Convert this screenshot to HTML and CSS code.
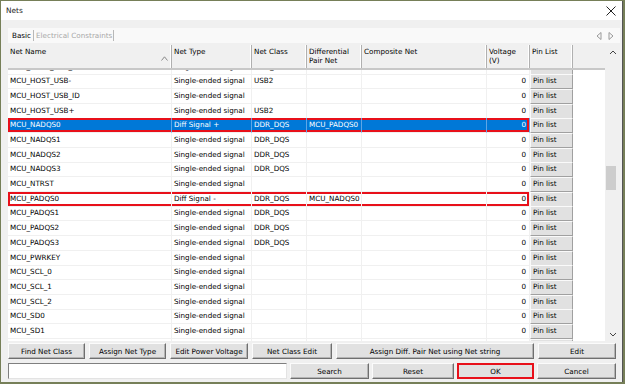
FILE: index.html
```html
<!DOCTYPE html>
<html lang="en">
<head>
    <meta charset="UTF-8">
    <title>Nets</title>
    <link rel="stylesheet" href="styles.css">
</head>
<body>
    <div class="window">
        <div class="titlebar">
            <span class="title">Nets</span>
            <svg class="close-icon" width="10" height="10" viewBox="0 0 10 10">
                <path d="M0.5 0.5 L9.5 9.5 M9.5 0.5 L0.5 9.5" stroke="#222" stroke-width="1" fill="none"/>
            </svg>
        </div>

        <div class="content">
            <div class="tabs">
                <span class="tab active">Basic</span>
                <span class="tab disabled">Electrical Constraints</span>
                <span class="tab-arrows">
                    <svg width="6" height="8" viewBox="0 0 6 8"><path d="M5 0.5 L1 4 L5 7.5 Z" stroke="#999" fill="none"/></svg>
                    <svg width="6" height="8" viewBox="0 0 6 8"><path d="M1 0.5 L5 4 L1 7.5 Z" stroke="#999" fill="none"/></svg>
                </span>
            </div>

            <div class="grid">
                <div class="grid-main">
                    <div class="head">
                        <div class="hcell">Net Name
                            <svg class="sort-icon" width="7" height="5" viewBox="0 0 7 5"><path d="M0.5 4.5 L3.5 0.8 L6.5 4.5" stroke="#888" fill="none"/></svg>
                        </div>
                        <div class="hcell">Net Type</div>
                        <div class="hcell">Net Class</div>
                        <div class="hcell">Differential<br>Pair Net</div>
                        <div class="hcell">Composite Net</div>
                        <div class="hcell">Voltage<br>(V)</div>
                        <div class="hcell">Pin List</div>
                        <div class="hcell filler"></div>
                    </div>
                    <div class="body">
                        <div class="rows" id="rows"></div>
                    </div>
                </div>
                <div class="vscroll">
                    <svg class="arrow" width="8" height="5" viewBox="0 0 8 5"><path d="M1 4 L4 1 L7 4" stroke="#444" fill="none"/></svg>
                    <div class="track">
                        <div class="thumb"></div>
                    </div>
                    <svg class="arrow" width="8" height="5" viewBox="0 0 8 5"><path d="M1 1 L4 4 L7 1" stroke="#444" fill="none"/></svg>
                </div>
            </div>

            <div class="btn-row first">
                <button class="btn">Find Net Class</button>
                <button class="btn">Assign Net Type</button>
                <button class="btn">Edit Power Voltage</button>
                <button class="btn">Net Class Edit</button>
                <button class="btn">Assign Diff. Pair Net using Net string</button>
                <button class="btn">Edit</button>
            </div>
            <div class="btn-row second">
                <input type="text" class="search-input">
                <button class="btn">Search</button>
                <button class="btn">Reset</button>
                <button class="btn ok">OK</button>
                <button class="btn">Cancel</button>
            </div>
        </div>
    </div>

    <script>
        // last entry is the row cut off under the list, only its top edge shows
        const nets = [
            ['MCU_HOST_USB_EN', 'Single-ended signal', 'DDR_CLK', ''],
            ['MCU_HOST_USB-', 'Single-ended signal', 'USB2', ''],
            ['MCU_HOST_USB_ID', 'Single-ended signal', '', ''],
            ['MCU_HOST_USB+', 'Single-ended signal', 'USB2', ''],
            ['MCU_NADQS0', 'Diff Signal +', 'DDR_DQS', 'MCU_PADQS0', 'selected'],
            ['MCU_NADQS1', 'Single-ended signal', 'DDR_DQS', ''],
            ['MCU_NADQS2', 'Single-ended signal', 'DDR_DQS', ''],
            ['MCU_NADQS3', 'Single-ended signal', 'DDR_DQS', ''],
            ['MCU_NTRST', 'Single-ended signal', '', ''],
            ['MCU_PADQS0', 'Diff Signal -', 'DDR_DQS', 'MCU_NADQS0', 'marked'],
            ['MCU_PADQS1', 'Single-ended signal', 'DDR_DQS', ''],
            ['MCU_PADQS2', 'Single-ended signal', 'DDR_DQS', ''],
            ['MCU_PADQS3', 'Single-ended signal', 'DDR_DQS', ''],
            ['MCU_PWRKEY', 'Single-ended signal', '', ''],
            ['MCU_SCL_0', 'Single-ended signal', '', ''],
            ['MCU_SCL_1', 'Single-ended signal', '', ''],
            ['MCU_SCL_2', 'Single-ended signal', '', ''],
            ['MCU_SD0', 'Single-ended signal', '', ''],
            ['MCU_SD1', 'Single-ended signal', '', ''],
            ['', '', '', '', 'empty']
        ];

        const rows = document.getElementById('rows');
        nets.forEach(net => {
            const row = document.createElement('div');
            const blank = net[4] === 'empty';
            row.className = 'row' + (net[4] ? ' ' + net[4] : '');
            row.innerHTML =
                `<div class="cell">${net[0]}</div>` +
                `<div class="cell">${net[1]}</div>` +
                `<div class="cell">${net[2]}</div>` +
                `<div class="cell">${net[3]}</div>` +
                `<div class="cell"></div>` +
                `<div class="cell num">${blank ? '' : '0'}</div>` +
                `<div class="cell pin"><span class="pin-btn">${blank ? '' : 'Pin list'}</span></div>` +
                `<div class="cell blank"></div>`;
            rows.appendChild(row);
        });
    </script>
</body>
</html>
```

FILE: styles.css
```css
body {
    margin: 0;
    background-color: #767f58;
    font-family: "DejaVu Sans", Verdana, sans-serif;
    font-size: 7.2px;
    color: #000;
}

.window {
    margin: 1px 0 0 1px;
    width: 621px;
    height: 381px;
    background: #f0f0f0;
    border-right: 1px solid #555;
    display: flex;
    flex-direction: column;
}

.titlebar {
    height: 19px;
    background: #fff;
    display: flex;
    align-items: center;
    justify-content: space-between;
    padding: 0 6px 0 5px;
}

.title {
    font-size: 7.4px;
    color: #222;
}

.content {
    padding: 8px 6px 0 7px;
    display: flex;
    flex-direction: column;
}

.tabs {
    height: 15px;
    background: #f9f9f9;
    display: flex;
    align-items: center;
    padding-left: 3px;
    margin-right: -4px;
    margin-bottom: 2px;
}

.tab {
    padding: 0 1px;
    border-right: 1px solid #b8b8b8;
    line-height: 11px;
}

.tab.active {
    color: #000;
    padding-right: 2px;
}

.tab.disabled {
    color: #a8a8a8;
    padding-left: 2px;
}

.tab-arrows {
    margin-left: auto;
    display: flex;
    gap: 6px;
    padding-right: 6px;
}

.grid {
    height: 296px;
    display: flex;
    margin-right: -4px;
}

.grid-main {
    flex: 1;
    display: flex;
    flex-direction: column;
    overflow: hidden;
}

.head, .row {
    display: grid;
    grid-template-columns: 164px 80px 55px 55px 125px 43px 43px 1fr;
}

.head {
    height: 25px;
    border-bottom: 2px solid #c8c8c8;
    box-sizing: border-box;
    background: #f0f0f0;
}

.hcell {
    padding: 2px 2px 0 2px;
    line-height: 9px;
    border-right: 1px solid #b0b0b0;
    box-shadow: inset -1px 0 0 #fff;
    position: relative;
}

.hcell.filler {
    border-right: none;
    box-shadow: none;
}

.sort-icon {
    position: absolute;
    right: 3px;
    top: 11px;
}

.body {
    flex: 1;
    background: #fff;
    overflow: hidden;
}

.rows {
    margin-top: -10.4px;
}

.row {
    height: 14.7px;
    line-height: 14px;
}

.cell {
    border-right: 1px solid #f0f0f0;
    border-bottom: 1px solid #f0f0f0;
    padding-left: 2px;
    white-space: nowrap;
}

.cell.num {
    text-align: right;
    padding-right: 3px;
}

.cell.pin {
    padding: 0;
    border-right: none;
    border-bottom: none;
    display: flex;
}

.cell.blank {
    border: none;
}

.pin-btn {
    flex: 1;
    background: #e1e1e1;
    border-top: 1px solid #fafafa;
    border-left: 1px solid #fafafa;
    border-right: 1px solid #a0a0a0;
    border-bottom: 1px solid #a0a0a0;
    padding-left: 2px;
    line-height: 12px;
}

.row.selected .cell:nth-child(-n+6) {
    background: #0078d7;
    color: #fff;
    border-right-color: #5fa6e6;
}

.row.selected .cell:nth-child(-n+6),
.row.marked .cell:nth-child(-n+6) {
    box-shadow: inset 0 2px 0 #e8101a, inset 0 -2px 0 #e8101a;
}

.row.selected .cell:nth-child(1),
.row.marked .cell:nth-child(1) {
    box-shadow: inset 0 2px 0 #e8101a, inset 0 -2px 0 #e8101a, inset 2px 0 0 #e8101a;
}

.row.selected .cell:nth-child(6),
.row.marked .cell:nth-child(6) {
    box-shadow: inset 0 2px 0 #e8101a, inset 0 -2px 0 #e8101a, inset -2px 0 0 #e8101a;
}

.vscroll {
    width: 15px;
    background: #f0f0f0;
    display: flex;
    flex-direction: column;
    align-items: center;
    padding: 5px 0 4px;
    box-sizing: border-box;
}

.track {
    flex: 1;
    width: 100%;
}

.thumb {
    margin: 111px 4px 0 1px;
    height: 24px;
    background: #cdcdcd;
}

.btn-row {
    display: grid;
    gap: 3px;
    height: 16px;
}

.btn-row.first {
    margin-top: 2px;
    grid-template-columns: 77px 77px 78px 80px 198px 78px;
    column-gap: 4px;
}

.btn-row.second {
    margin-top: 4px;
    grid-template-columns: 279px 79px 82px 77px 79px;
}

.btn {
    font-family: "DejaVu Sans", Verdana, sans-serif;
    font-size: 7.2px;
    color: #000;
    background: #e1e1e1;
    border: 1px solid;
    border-color: #fbfbfb #6f6f6f #6f6f6f #fbfbfb;
    box-shadow: inset -1px -1px 0 #b4b4b4;
    padding: 0;
    margin: 0;
}

.btn.ok {
    border: 2px solid #e8101a;
    box-shadow: none;
}

.search-input {
    margin: 0;
    padding: 0;
    border: 1px solid;
    border-color: #7f7f7f #e3e3e3 #e3e3e3 #7f7f7f;
    background: #fff;
    height: 16px;
    box-sizing: border-box;
}
```
